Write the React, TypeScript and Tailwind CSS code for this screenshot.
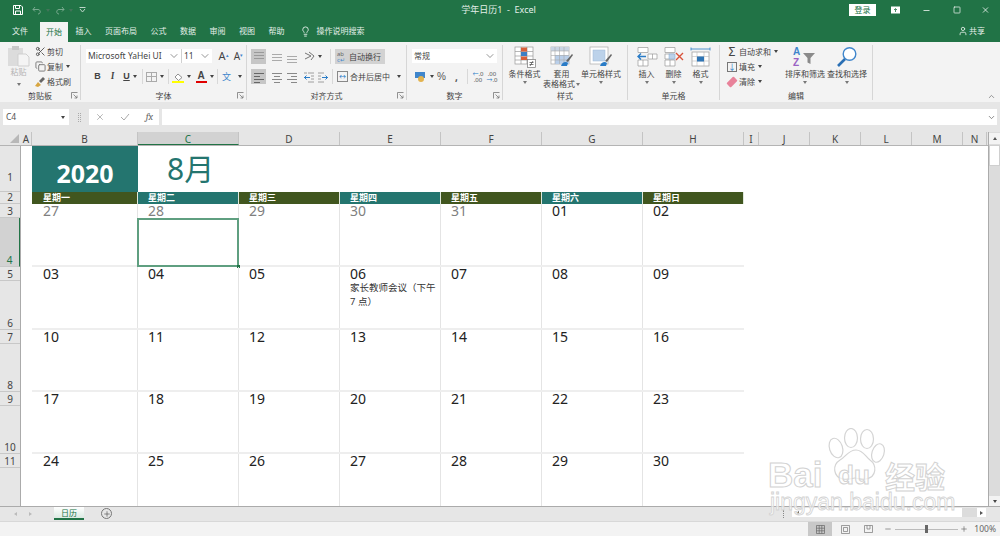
import type { ReactNode } from "react";
import { ChevronDown, ChevronUp, Copy, Lightbulb, Minus, Plus, Scissors, Square, User, X } from "lucide-react";

const Caret = ({ dark }: { dark?: boolean }) => (
    <span className={`inline-block w-0 h-0 border-x-[2.5px] border-x-transparent border-t-[3px] ${dark ? "border-t-[#444]" : "border-t-[#777]"}`} />
);

const Sep = () => <span className="block w-px h-[15px] bg-[#d8d8d8]" />;

function Lines({ rows, color = "#666" }: { rows: number[][]; color?: string }) {
    return (
        <svg width="14" height="14" viewBox="0 0 14 14">
            {rows.map((r, i) => (
                <rect key={i} x={r[0]} y={r[1]} width={r[2]} height="1" fill={color} />
            ))}
        </svg>
    );
}

const Launcher = () => (
    <svg className="absolute right-[2px] bottom-[1px]" width="7" height="7" viewBox="0 0 7 7" fill="none" stroke="#777" strokeWidth="0.8">
        <path d="M0.5 6.5V0.5H6.5M2.5 2.5L6 6M6 3.5V6H3.5" />
    </svg>
);

function Group({ className, label, launcher, children }: { className: string; label: string; launcher?: boolean; children: ReactNode }) {
    return (
        <div className={`relative shrink-0 flex flex-col h-[55px] mt-[3px] border-r border-[#d6d6d6] ${className}`}>
            <div className="h-[46px] flex">{children}</div>
            <div className="h-[9px] leading-[9px] text-center text-[8px] text-[#444]">{label}</div>
            {launcher && <Launcher />}
        </div>
    );
}

function BigBtn({ w, icon, label, label2 }: { w: string; icon: ReactNode; label: string; label2?: string }) {
    return (
        <div className={`${w} shrink-0 flex flex-col items-center text-[8px] leading-[10px] text-[#444]`}>
            <div className="h-[23px] flex items-center justify-center">{icon}</div>
            <div className="whitespace-nowrap mt-[1px]">{label}</div>
            {label2 ? (
                <div className="whitespace-nowrap flex items-center gap-[1px]">{label2}<Caret /></div>
            ) : (
                <div className="mt-[2px] leading-[6px] flex justify-center"><Caret /></div>
            )}
        </div>
    );
}

function SmallRow({ icon, label, caret }: { icon: ReactNode; label: string; caret?: boolean }) {
    return (
        <div className="h-[15px] flex items-center gap-[1px] text-[8px] text-[#444] whitespace-nowrap">
            <span className="w-[12px] flex justify-center">{icon}</span>
            {label}
            {caret && <span className="ml-[2px] flex"><Caret dark /></span>}
        </div>
    );
}

const IconPaste = (
    <svg width="24" height="22" viewBox="0 0 24 22">
        <rect x="1" y="3" width="15" height="18" fill="#dcdcdc" />
        <rect x="5" y="1" width="7" height="4" fill="#c8c8c8" />
        <path d="M11 9h8l3 3v9H11z" fill="#f4f4f4" stroke="#cfcfcf" />
    </svg>
);
const IconBrush = (
    <svg width="12" height="12" viewBox="0 0 12 12">
        <path d="M1 10l3-4 3 3-3 2z" fill="#d8a640" />
        <path d="M5 5l4-4 2 2-4 4z" fill="#666" />
    </svg>
);
const IconCond = (
    <svg width="22" height="22" viewBox="0 0 22 22">
        <g fill="#fff" stroke="#999" strokeWidth="0.7">
            <rect x="1" y="1" width="18" height="17" />
            <path d="M7 1v17M13 1v17M1 5.5h18M1 10h18M1 14h18" fill="none" />
        </g>
        <rect x="7" y="1.5" width="6" height="4" fill="#d8603a" />
        <rect x="7" y="6" width="6" height="4" fill="#3c7fc4" />
        <rect x="7" y="10.5" width="6" height="3.5" fill="#d8603a" />
        <rect x="13.5" y="13.5" width="8" height="8" fill="#fff" stroke="#777" strokeWidth="0.7" />
        <path d="M15.5 16.5h4M15.5 18.5h4M19 15l-3 5" stroke="#444" strokeWidth="0.7" />
    </svg>
);
const IconTable = (
    <svg width="24" height="22" viewBox="0 0 24 22">
        <rect x="1" y="1" width="18" height="17" fill="#fff" stroke="#aaa" strokeWidth="0.7" />
        <rect x="1" y="1" width="18" height="4" fill="#c9d4e3" />
        <rect x="5" y="9" width="14" height="9" fill="#b9cfea" />
        <path d="M5 1v17M9.5 1v17M14 1v17M1 5h18M1 9.5h18M1 14h18" stroke="#aaa" strokeWidth="0.6" />
        <path d="M16 15l6-7 1 1-5 7z" fill="#666" />
        <path d="M11 20c1-4 5-5 7-3l-1 3z" fill="#2a7cc7" />
    </svg>
);
const IconCellStyle = (
    <svg width="24" height="22" viewBox="0 0 24 22">
        <rect x="1" y="1" width="18" height="17" fill="#fff" stroke="#aaa" strokeWidth="0.7" />
        <rect x="4" y="4" width="12" height="11" fill="#bcd2ea" stroke="#9db8d6" strokeWidth="0.5" />
        <path d="M16 15l6-7 1 1-5 7z" fill="#666" />
        <path d="M11 20c1-4 5-5 7-3l-1 3z" fill="#2a7cc7" />
    </svg>
);
const IconInsert = (
    <svg width="22" height="22" viewBox="0 0 22 22">
        <path d="M2 1.5h10v5H2zM2 14h10v6H2zM7 14v6M12 8h9v5h-9zM16.5 8v5" fill="#fff" stroke="#999" strokeWidth="0.7" />
        <path d="M10 10.5H2M5 7.5l-3 3 3 3" fill="none" stroke="#2a7cc7" strokeWidth="1.4" />
    </svg>
);
const IconDelete = (
    <svg width="22" height="22" viewBox="0 0 22 22">
        <path d="M2 1.5h10v5H2zM2 14h10v6H2zM7 14v6M2 8h9v5H2z" fill="#fff" stroke="#999" strokeWidth="0.7" />
        <rect x="6" y="8" width="6" height="5" fill="#bcd2ea" stroke="#7fa6d0" strokeWidth="0.5" />
        <path d="M13 7l7 7M20 7l-7 7" stroke="#d8523a" strokeWidth="1.4" />
    </svg>
);
const IconFormat = (
    <svg width="22" height="22" viewBox="0 0 22 22">
        <path d="M1 3h19M1 1.5v3M20 1.5v3" stroke="#2a7cc7" strokeWidth="0.8" fill="none" />
        <rect x="2" y="6" width="17" height="14" fill="#fff" stroke="#999" strokeWidth="0.7" />
        <path d="M7 6v14M14 6v14M2 10.5h17M2 15h17" stroke="#bbb" strokeWidth="0.6" />
        <rect x="7" y="10.5" width="7" height="5" fill="#2f75b5" />
    </svg>
);
const IconSort = (
    <svg width="26" height="22" viewBox="0 0 26 22" fontFamily="'Liberation Sans'" fontWeight="700" fontSize="10">
        <text x="1" y="9" fill="#3f86cc">A</text>
        <text x="1" y="20" fill="#9a62c4">Z</text>
        <path d="M11 7h12l-4.5 5v6l-3-1.5V12z" fill="#8a8a8a" />
    </svg>
);
const IconFind = (
    <svg width="22" height="22" viewBox="0 0 22 22" fill="none">
        <circle cx="13.5" cy="8" r="6.3" stroke="#3f86cc" strokeWidth="1.4" fill="#fff" />
        <path d="M9 13l-7 7" stroke="#2a6fb4" strokeWidth="2.6" />
    </svg>
);

function Clipboard() {
    return (
        <Group className="w-[81px]" label="剪贴板" launcher>
            <div className="w-[34px] pl-[3px] flex flex-col items-center text-[8px] text-[#b4b4b4] leading-[10px]">
                <div className="h-[23px]">{IconPaste}</div>
                <div className="mt-[-1px]">粘贴</div>
                <div className="mt-[3px] leading-[6px]"><Caret /></div>
            </div>
            <div className="mt-[-1px] flex flex-col">
                <SmallRow icon={<Scissors size={11} color="#555" />} label="剪切" />
                <SmallRow icon={<Copy size={11} color="#777" />} label="复制" caret />
                <SmallRow icon={IconBrush} label="格式刷" />
            </div>
        </Group>
    );
}

function FontGroup() {
    return (
        <Group className="w-[166px]" label="字体" launcher>
            <div className="pt-[4px] pl-[5px] flex flex-col">
                <div className="h-[14px] flex items-center text-[8.5px] text-[#444]">
                    <div className="w-[96px] h-[14px] bg-white flex items-center justify-between pl-[2px] pr-[1px] border-r border-[#d0d0d0]">
                        Microsoft YaHei UI
                        <ChevronDown size={12} strokeWidth={1.25} color="#555" />
                    </div>
                    <div className="w-[30px] h-[14px] bg-white flex items-center justify-between pl-[2px] pr-[1px]">
                        11
                        <ChevronDown size={12} strokeWidth={1.25} color="#555" />
                    </div>
                    <span className="ml-[4px] w-[15px] text-[11px] text-center">A<sup className="text-[#3f86cc] text-[5px]">▴</sup></span>
                    <span className="w-[15px] text-[10px] text-center">A<sup className="text-[#3f86cc] text-[5px]">▾</sup></span>
                </div>
                <div className="mt-[6px] h-[15px] flex items-center text-[9px] text-[#444] font-['Liberation_Sans',sans-serif]">
                    <b className="ml-[4px] w-[15px] text-center">B</b>
                    <i className="w-[15px] text-center font-serif font-bold">I</i>
                    <u className="w-[13px] text-center font-bold">U</u>
                    <span className="w-[7px] flex"><Caret dark /></span>
                    <span className="ml-[2px]"><Sep /></span>
                    <span className="ml-[3px] mr-[3px] w-[11px] h-[10px] border border-[#aaa] bg-[linear-gradient(#aaa,#aaa),linear-gradient(#aaa,#aaa)] bg-[length:1px_100%,100%_1px] bg-center bg-no-repeat" />
                    <span className="w-[8px] flex"><Caret dark /></span>
                    <Sep />
                    <span className="ml-[3px] w-[12px] h-[13px] flex flex-col items-center justify-end">
                        <svg width="9" height="8" viewBox="0 0 9 8"><path d="M4 1l4 3.5-3.5 3L1 4z" fill="#fff" stroke="#777" strokeWidth="0.8" /></svg>
                        <span className="w-[12px] h-[2px] bg-[#ffff00]" />
                    </span>
                    <span className="ml-[3px] w-[8px] flex"><Caret dark /></span>
                    <span className="w-[12px] flex flex-col items-center leading-[10px]">
                        <span className="text-[10px] font-bold">A</span>
                        <span className="w-[11px] h-[2px] bg-[#e00000]" />
                    </span>
                    <span className="ml-[3px] w-[7px] flex"><Caret dark /></span>
                    <Sep />
                    <span className="ml-[4px] w-[13px] text-[#3f86cc] text-[9px] font-['Noto_Sans_CJK_SC',sans-serif]">文</span>
                    <span className="ml-[3px] flex"><Caret dark /></span>
                </div>
            </div>
        </Group>
    );
}

function AlignGroup() {
    const top = [[2, 2, 10], [2, 5, 10], [2, 8, 10]];
    const mid = [[2, 4, 10], [2, 7, 10], [2, 10, 10]];
    const bot = [[2, 6, 10], [2, 9, 10], [2, 12, 10]];
    return (
        <Group className="w-[160px]" label="对齐方式" launcher>
            <div className="pt-[4px] pl-[4px] flex flex-col">
                <div className="h-[15px] flex items-center">
                    <span className="w-[15px] h-[15px] bg-[#c6c6c6] flex items-center justify-center"><Lines rows={top} color="#999" /></span>
                    <span className="ml-[3px] w-[15px] flex justify-center"><Lines rows={mid} color="#aaa" /></span>
                    <span className="w-[15px] flex justify-center"><Lines rows={bot} color="#aaa" /></span>
                    <span className="ml-[3px] w-[14px] flex justify-center">
                        <svg width="13" height="13" viewBox="0 0 13 13" fill="none" stroke="#666" strokeWidth="0.9"><path d="M2 3l6 3-6 3M6 2l5 4-3 4" /></svg>
                    </span>
                    <span className="ml-[2px] w-[10px] flex"><Caret dark /></span>
                    <span className="ml-[2px]"><Sep /></span>
                    <div className="ml-[4px] w-[50px] h-[15px] bg-[#d2d2d2] flex items-center gap-[3px] pl-[2px] text-[8px] text-[#444] whitespace-nowrap">
                        <span className="text-[6px] leading-[6px] text-[#666] w-[9px]">ab<br /><span className="text-[#3f86cc]">c↵</span></span>
                        自动换行
                    </div>
                </div>
                <div className="mt-[5px] h-[15px] flex items-center">
                    <span className="w-[15px] h-[15px] bg-[#c6c6c6] flex items-center justify-center"><Lines rows={[[2, 3, 10], [2, 6, 6], [2, 9, 10], [2, 12, 6]]} /></span>
                    <span className="ml-[3px] w-[15px] flex justify-center"><Lines rows={[[2, 3, 10], [4, 6, 6], [2, 9, 10], [4, 12, 6]]} color="#888" /></span>
                    <span className="w-[15px] flex justify-center"><Lines rows={[[2, 3, 10], [6, 6, 6], [2, 9, 10], [6, 12, 6]]} color="#888" /></span>
                    <span className="ml-[3px] w-[14px] flex justify-center">
                        <svg width="12" height="12" viewBox="0 0 12 12"><path d="M5 2h6M8 5h3M8 8h3M5 11h6M1 2h3" stroke="#888" strokeWidth="0.8" /><path d="M7 6.5H1M3.5 4.5l-2 2 2 2" stroke="#2a7cc7" fill="none" /></svg>
                    </span>
                    <span className="w-[14px] flex justify-center">
                        <svg width="12" height="12" viewBox="0 0 12 12"><path d="M1 2h6M1 5h3M1 8h3M1 11h6" stroke="#888" strokeWidth="0.8" /><path d="M5 6.5h6M8.500 4.500l2 2-2 2" stroke="#2a7cc7" fill="none" /></svg>
                    </span>
                    <span className="ml-[2px]"><Sep /></span>
                    <span className="ml-[4px] w-[11px] h-[11px] border border-[#888] flex items-center justify-center text-[#2a7cc7] text-[7px] leading-[7px]">↔</span>
                    <span className="ml-[2px] text-[8px] text-[#444] whitespace-nowrap">合并后居中</span>
                    <span className="ml-[7px] flex"><Caret dark /></span>
                </div>
            </div>
        </Group>
    );
}

function NumberGroup() {
    return (
        <Group className="w-[96px]" label="数字" launcher>
            <div className="pt-[4px] pl-[5px] flex flex-col">
                <div className="w-[85px] h-[14px] bg-white flex items-center justify-between pl-[2px] pr-[1px] text-[8px] text-[#444]">
                    常规
                    <ChevronDown size={12} strokeWidth={1.25} color="#555" />
                </div>
                <div className="mt-[6px] h-[15px] flex items-center text-[#555]">
                    <svg className="ml-[2px]" width="12" height="12" viewBox="0 0 12 12"><rect x="1" y="1" width="10" height="6" fill="#3f86cc" /><circle cx="7" cy="8" r="3" fill="#e3b34f" /></svg>
                    <span className="ml-[4px] flex"><Caret dark /></span>
                    <span className="ml-[1px] w-[13px] text-[10px] text-center font-['Liberation_Sans',sans-serif]">%</span>
                    <span className="ml-[2px] w-[13px] text-[10px] text-center font-bold leading-[8px]">,</span>
                    <span className="ml-[4px]"><Sep /></span>
                    <span className="ml-[3px] w-[14px] text-[6px] leading-[6px] text-center"><span className="text-[#2a7cc7]">←</span>.0<br />.00</span>
                    <span className="w-[14px] text-[6px] leading-[6px] text-center">.00<br /><span className="text-[#2a7cc7]">→</span>.0</span>
                </div>
            </div>
        </Group>
    );
}

function StylesGroup() {
    return (
        <Group className="w-[125px]" label="样式">
            <div className="pl-[2px] flex">
                <BigBtn w="w-[39px]" icon={IconCond} label="条件格式" />
                <BigBtn w="w-[35px]" icon={IconTable} label="套用" label2="表格格式" />
                <BigBtn w="w-[44px]" icon={IconCellStyle} label="单元格样式" />
            </div>
        </Group>
    );
}

function CellsGroup() {
    return (
        <Group className="w-[92px]" label="单元格">
            <div className="pl-[5px] flex">
                <BigBtn w="w-[27px]" icon={IconInsert} label="插入" />
                <BigBtn w="w-[27px]" icon={IconDelete} label="删除" />
                <BigBtn w="w-[27px]" icon={IconFormat} label="格式" />
            </div>
        </Group>
    );
}

function EditGroup() {
    return (
        <Group className="w-[153px]" label="编辑">
            <div className="w-[64px] pl-[6px] mt-[-1px] flex flex-col">
                <SmallRow icon={<span className="text-[12px] leading-[12px] text-[#444]">Σ</span>} label="自动求和" caret />
                <SmallRow icon={<span className="w-[10px] h-[10px] border border-[#777] flex items-center justify-center text-[#2a7cc7] text-[8px] leading-[8px]">↓</span>} label="填充" caret />
                <SmallRow icon={<span className="w-[10px] h-[6px] rounded-[1px] bg-[#e8829a] -rotate-45" />} label="清除" caret />
            </div>
            <BigBtn w="w-[42px]" icon={IconSort} label="排序和筛选" />
            <BigBtn w="w-[42px]" icon={IconFind} label="查找和选择" />
        </Group>
    );
}

function TitleBar() {
    return (
        <div className="h-[20px] bg-[#217346] flex items-center text-white">
            <svg className="ml-[13px]" width="10" height="10" viewBox="0 0 10 10" fill="none" stroke="#fff" strokeWidth="1"><path d="M.5.5h7.5l1.500 1.500v7.500H.5zM2.500 1v2.500h4V1M2.500 9V6h5v3" /></svg>
            <svg className="ml-[9px] opacity-40" width="10" height="9" viewBox="0 0 10 9" fill="none" stroke="#fff"><path d="M3 1L1 3.500l2 2M1 3.500h5c3 0 3 4.500 0 4.500" /></svg>
            <span className="ml-[4px] opacity-40 flex"><Caret /></span>
            <svg className="ml-[5px] opacity-40" width="10" height="9" viewBox="0 0 10 9" fill="none" stroke="#fff"><path d="M7 1l2 2.500-2 2M9 3.500H4C1 3.500 1 8 4 8" /></svg>
            <span className="ml-[4px] opacity-40 flex"><Caret /></span>
            <svg className="ml-[6px] opacity-70" width="7" height="6" viewBox="0 0 7 6" fill="none" stroke="#fff"><path d="M.5.5h6M1 2l2.500 3L6 2" /></svg>
            <div className="flex-1 text-center text-[9px] text-[#e4efe9] pl-[62px] whitespace-pre">学年日历1  -  Excel</div>
            <div className="w-[27px] h-[12px] bg-white text-[#217346] text-[8px] leading-[12px] text-center">登录</div>
            <svg className="ml-[15px]" width="9" height="8" viewBox="0 0 9 8"><rect width="9" height="7" y="0.5" fill="#fff" /><path d="M4.5 6V3M3 4l1.500-1.500L6 4" stroke="#217346" fill="none" strokeWidth="0.8" /></svg>
            <span className="ml-[22px] w-[9px] flex justify-center"><Minus size={9} /></span>
            <span className="ml-[21px] w-[9px] flex justify-center"><Square size={8} /></span>
            <span className="ml-[20px] mr-[10px] w-[9px] flex justify-center"><X size={10} /></span>
        </div>
    );
}

function TabBar() {
    const tabs = ["插入", "页面布局", "公式", "数据", "审阅", "视图", "帮助"];
    return (
        <div className="h-[22px] bg-[#217346] flex items-center text-[8px] text-[#e4efe9]">
            <span className="ml-[12px] mr-[12px]">文件</span>
            <span className="w-[28px] h-[20px] mt-[2px] mr-[-6px] bg-[#f3f3f3] text-[#217346] text-center leading-[20px]">开始</span>
            {tabs.map((t) => (
                <span key={t} className="ml-[13.5px]">{t}</span>
            ))}
            <span className="ml-[15px]"><Lightbulb size={11} /></span>
            <span className="ml-[6px]">操作说明搜索</span>
            <span className="ml-auto flex items-center gap-[1px] mr-[15px]"><User size={10} />共享</span>
        </div>
    );
}

function Ribbon() {
    return (
        <div className="h-[60px] bg-[#f3f3f3] flex relative">
            <Clipboard />
            <FontGroup />
            <AlignGroup />
            <NumberGroup />
            <StylesGroup />
            <CellsGroup />
            <EditGroup />
            <ChevronUp className="absolute right-[4px] bottom-[1px]" size={9} color="#777" />
        </div>
    );
}

function FormulaBar() {
    return (
        <div className="h-[30px] pt-[7px] bg-[#e6e6e6] flex items-start text-[8.5px] text-[#555]">
            <div className="ml-[3px] w-[66px] h-[16px] bg-white flex items-center justify-between pl-[3px] pr-[4px]">C4<Caret dark /></div>
            <span className="ml-[9px] w-[3px] h-[9px] mt-[4px] border-x border-dotted border-[#aaa]" />
            <div className="ml-[8px] w-[70px] h-[16px] bg-white flex items-center justify-between px-[6px] text-[#aaa]">
                <X size={10} />
                <svg width="10" height="8" viewBox="0 0 10 8" fill="none" stroke="#aaa"><path d="M1 4l3 3 5-6" /></svg>
                <i className="font-serif text-[10px] text-[#666]">fx</i>
            </div>
            <div className="ml-[3px] flex-1 mr-[3px] h-[16px] bg-white flex items-center justify-end pr-[1px]"><ChevronDown size={9} color="#666" /></div>
        </div>
    );
}

const cols = [
    { n: "A", w: "w-[11px]" },
    { n: "B", w: "w-[106px]" },
    { n: "C", w: "w-[101px]", active: true },
    { n: "D", w: "w-[101px]" },
    { n: "E", w: "w-[101px]" },
    { n: "F", w: "w-[101px]" },
    { n: "G", w: "w-[101px]" },
    { n: "H", w: "w-[101px]" },
    { n: "I", w: "w-[15px]" },
    { n: "J", w: "w-[51px]" },
    { n: "K", w: "w-[51px]" },
    { n: "L", w: "w-[51px]" },
    { n: "M", w: "w-[51px]" },
    { n: "N", w: "w-[24px]" },
];

const rowHeads = [
    { n: "1", h: "h-[46px] pb-[8px]" },
    { n: "2", h: "h-[12px]" },
    { n: "3", h: "h-[14px]" },
    { n: "4", h: "h-[49px]", active: true },
    { n: "5", h: "h-[14px]" },
    { n: "6", h: "h-[49px]" },
    { n: "7", h: "h-[14px]" },
    { n: "8", h: "h-[48px]" },
    { n: "9", h: "h-[14px]" },
    { n: "10", h: "h-[48px]" },
    { n: "11", h: "h-[14px]" },
];

const dayNames = ["星期一", "星期二", "星期三", "星期四", "星期五", "星期六", "星期日"];
const weeks = [
    { h: "h-[63px]", days: ["27", "28", "29", "30", "31", "01", "02"] },
    { h: "h-[63px]", days: ["03", "04", "05", "06", "07", "08", "09"] },
    { h: "h-[62px]", days: ["10", "11", "12", "13", "14", "15", "16"] },
    { h: "h-[62px]", days: ["17", "18", "19", "20", "21", "22", "23"] },
    { h: "h-[52px]", days: ["24", "25", "26", "27", "28", "29", "30"] },
];

function Sheet() {
    return (
        <div className="flex">
            <div className="w-[988px] shrink-0">
                <div className="h-[14px] flex bg-[#e6e6e6] border-b border-[#b4b4b4] text-[10px] leading-[14px] text-[#444]">
                    <div className="w-[21px] shrink-0 flex items-end justify-end pr-[2px] pb-[2px]">
                        <span className="w-0 h-0 border-l-[9px] border-l-transparent border-b-[9px] border-b-[#b8b8b8]" />
                    </div>
                    {cols.map((c) => (
                        <div key={c.n} className={`${c.w} shrink-0 text-center border-r border-[#c4c4c4] ${c.active ? "bg-[#d2d2d2] text-[#217346] border-b border-b-[#217346]" : ""}`}>{c.n}</div>
                    ))}
                </div>
                <div className="h-[360px] flex overflow-hidden">
                    <div className="w-[21px] shrink-0 bg-[#e6e6e6] border-r border-[#ababab] text-[10px] leading-[12px] text-[#444]">
                        {rowHeads.map((r) => (
                            <div key={r.n} className={`${r.h} flex items-end justify-center border-b border-[#c8c8c8] ${r.active ? "bg-[#d2d2d2] text-[#217346] border-r border-r-[#217346]" : ""}`}>{r.n}</div>
                        ))}
                    </div>
                    <div className="flex-1 bg-white pl-[11px]">
                        <div className="h-[46px] flex items-center">
                            <div className="w-[106px] h-[46px] bg-[#24756f] text-white text-[25px] font-bold text-center leading-[54px]">2020</div>
                            <div className="pl-[29px] pb-[1px] text-[#24756f] text-[30px] leading-[46px]">8月</div>
                        </div>
                        <div className="h-[12px] flex text-white text-[9px] font-bold leading-[12px]">
                            {dayNames.map((d, i) => (
                                <div key={d} className={`${i === 0 ? "w-[106px] pl-[11px]" : "w-[101px] pl-[10px]"} ${i % 2 ? "bg-[#24756f]" : "bg-[#41561f]"} border-r border-[#dfe8dc]`}>{d}</div>
                            ))}
                        </div>
                        {weeks.map((w, wi) => (
                            <div key={wi} className={`${w.h} w-[712px] flex ${wi < 4 ? "border-b-2 border-[#eeeeee]" : ""}`}>
                                {w.days.map((d, i) => (
                                    <div key={i} className={`relative ${i === 0 ? "w-[106px] pl-[11px]" : "w-[101px] pl-[10px]"} ${i < 6 ? "border-r border-[#e4e4e4]" : ""} ${wi === 0 && i < 5 ? "text-[#7f7f7f]" : "text-[#222]"} text-[14px] leading-[14px]`}>
                                        {d}
                                        {wi === 1 && d === "06" && (
                                            <div className="w-[88px] text-[9.5px] leading-[14px] text-[#333]">家长教师会议（下午 7 点）</div>
                                        )}
                                        {wi === 0 && i === 1 && (
                                            <div className="absolute left-[-1px] right-[-1px] top-[14px] bottom-[-2px] border-2 border-[#5f9f80]">
                                                <span className="absolute right-[-3px] bottom-[-3px] w-[3px] h-[3px] bg-[#217346]" />
                                            </div>
                                        )}
                                    </div>
                                ))}
                            </div>
                        ))}
                    </div>
                </div>
            </div>
            <div className="w-[12px] h-[374px] bg-[#dcdcdc] border-l border-[#ababab] flex flex-col">
                <div className="h-[11px] mt-[1px] bg-[#f3f3f3] flex items-center justify-center"><span className="w-0 h-0 border-x-[2.5px] border-x-transparent border-b-[3px] border-b-[#555]" /></div>
                <div className="h-[21px] mt-[1px] bg-white border border-[#cfcfcf]" />
                <div className="flex-1" />
                <div className="h-[10px] bg-[#f3f3f3] flex items-center justify-center"><Caret dark /></div>
            </div>
        </div>
    );
}

function SheetTabs() {
    return (
        <div className="h-[15px] bg-[#e6e6e6] border-t border-[#ababab] flex items-start text-[#bbb]">
            <span className="ml-[14px] mt-[5px] w-0 h-0 border-y-[2.5px] border-y-transparent border-r-[3px] border-r-[#bbb]" />
            <span className="ml-[12px] mt-[5px] w-0 h-0 border-y-[2.5px] border-y-transparent border-l-[3px] border-l-[#bbb]" />
            <div className="ml-[22px] w-[30px] h-[13px] bg-[linear-gradient(#fff,#dbe9e2)] border-b-2 border-[#217346] text-[#217346] text-[8px] leading-[11px] text-center">日历</div>
            <span className="ml-[17px] mt-[1px] w-[11px] h-[11px] rounded-full border border-[#777] text-[#555] flex items-center justify-center"><Plus size={8} /></span>
            <span className="ml-auto mt-[3px] mr-[7px] w-[2px] h-[8px] border-l border-dotted border-[#888]" />
            <div className="mt-[1px] w-[170px] h-[9px] bg-white flex items-center pl-[4px]"><span className="w-0 h-0 border-y-[2px] border-y-transparent border-r-[3px] border-r-[#555]" /></div>
            <div className="mt-[1px] w-[15px] h-[9px] bg-[#dcdcdc]" />
            <div className="mt-[1px] w-[9px] h-[9px] bg-white flex items-center justify-center"><span className="w-0 h-0 border-y-[2px] border-y-transparent border-l-[3px] border-l-[#555]" /></div>
            <span className="w-[14px]" />
        </div>
    );
}

function StatusBar() {
    return (
        <div className="h-[15px] bg-[#f3f3f3] border-t border-[#d8d8d8] flex items-center justify-end text-[#666] text-[8.5px]">
            <div className="w-[24px] h-[15px] bg-[#c8c8c8] flex items-center justify-center">
                <svg width="9" height="9" viewBox="0 0 9 9" fill="none" stroke="#666" strokeWidth="0.7"><path d="M.5.5h8v8h-8zM3.2.5v8M5.8.5v8M.5 3.2h8M.5 5.8h8" /></svg>
            </div>
            <svg className="ml-[9px]" width="9" height="9" viewBox="0 0 9 9" fill="none" stroke="#777" strokeWidth="0.7"><path d="M.5.5h8v8h-8zM2.500 2.500h4v4h-4z" /></svg>
            <svg className="ml-[14px]" width="9" height="8" viewBox="0 0 9 8" fill="none" stroke="#777" strokeWidth="0.7"><path d="M.5.5h8v7h-8zM3 .5v3.500h3V.5" /></svg>
            <Minus className="ml-[11px]" size={8} />
            <div className="ml-[3px] w-[63px] h-px bg-[#bbb] flex items-center justify-center"><span className="w-[3px] h-[8px] bg-[#666]" /></div>
            <Plus className="ml-[2px]" size={8} />
            <span className="ml-[6px] mr-[4px]">100%</span>
        </div>
    );
}

// watermark sits over the sheet and the bars below it
function Watermark() {
    const outline = "[-webkit-text-stroke:1px_#d2d2d2] text-white/70 font-['Liberation_Sans',sans-serif] font-bold";
    return (
        <div className="absolute left-[768px] top-[428px] w-[180px] h-[84px] pointer-events-none">
            <svg className="absolute left-[58px] top-0" width="62" height="58" viewBox="0 0 62 58" fill="#fff" fillOpacity="0.6" stroke="#d4d4d4" strokeWidth="1.2">
                <ellipse cx="10" cy="20" rx="6.5" ry="10" transform="rotate(-18 10 20)" />
                <ellipse cx="25" cy="10" rx="6.5" ry="9.5" />
                <ellipse cx="41" cy="11" rx="6.5" ry="9.5" />
                <ellipse cx="52" cy="25" rx="6" ry="9.5" transform="rotate(18 52 25)" />
                <path d="M30 22c7 0 9 6 14 10 7 5 7 17-4 19-5 1-8-1-11-1s-7 2-12 1C7 49 6 37 14 32c6-3 8-10 16-10z" />
            </svg>
            <div className={`absolute left-0 top-[29px] text-[35px] leading-[36px] ${outline}`}>Bai</div>
            <div className={`absolute left-[70px] top-[33px] text-[26px] leading-[28px] ${outline}`}>du</div>
            <div className="absolute left-[117px] top-[30px] text-[30px] leading-[34px] whitespace-nowrap font-['Noto_Sans_CJK_SC',sans-serif] [-webkit-text-stroke:1px_#d2d2d2] text-white/70 font-bold">经验</div>
            <div className="absolute left-[2px] top-[62px] text-[23px] leading-[24px] whitespace-nowrap [-webkit-text-stroke:0.8px_#d2d2d2] text-white/70 font-['Liberation_Sans',sans-serif]">jingyan.baidu.com</div>
        </div>
    );
}

export default function App() {
    return (
        <div className="relative w-[1000px] h-[536px] overflow-hidden bg-[#e6e6e6] font-['Noto_Sans','Noto_Sans_CJK_SC',sans-serif]">
            <TitleBar />
            <TabBar />
            <Ribbon />
            <FormulaBar />
            <Sheet />
            <SheetTabs />
            <StatusBar />
            <Watermark />
        </div>
    );
}
